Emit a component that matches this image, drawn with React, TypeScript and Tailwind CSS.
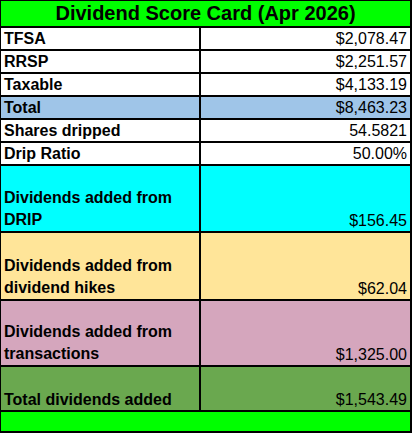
import React from 'react'

type Row = { label: React.ReactNode; value: string; bg: string; h: string; multi?: boolean }

const rows: Row[] = [
  { label: 'TFSA', value: '$2,078.47', bg: 'bg-white', h: 'h-[21px]' },
  { label: 'RRSP', value: '$2,251.57', bg: 'bg-white', h: 'h-[21px]' },
  { label: 'Taxable', value: '$4,133.19', bg: 'bg-white', h: 'h-[21px]' },
  { label: 'Total', value: '$8,463.23', bg: 'bg-[#9fc5e8]', h: 'h-[21px]' },
  { label: 'Shares dripped', value: '54.5821', bg: 'bg-white', h: 'h-[21px]' },
  { label: 'Drip Ratio', value: '50.00%', bg: 'bg-white', h: 'h-[21px]' },
  { label: <>Dividends added from<br />DRIP</>, value: '$156.45', bg: 'bg-[#00ffff]', h: 'h-[65px]', multi: true },
  { label: <>Dividends added from<br />dividend hikes</>, value: '$62.04', bg: 'bg-[#ffe599]', h: 'h-[66px]', multi: true },
  { label: <>Dividends added from<br />transactions</>, value: '$1,325.00', bg: 'bg-[#d5a6bd]', h: 'h-[64px]', multi: true },
  { label: 'Total dividends added', value: '$1,543.49', bg: 'bg-[#6aa84f]', h: 'h-[43px]' },
]

const App = () => {
  return (
    <div className="w-[412px] h-[433px] bg-white" style={{ fontFamily: '"Liberation Sans", Arial, sans-serif' }}>
      <div className="grid grid-cols-[198px_209px] gap-[2px] bg-black pt-[1px] pl-[1px] pr-[2px] pb-[2px] text-black">
        {/* title */}
        <div className="col-span-2 h-[25px] bg-[#00ff00] flex items-center justify-center text-[20px] leading-[25px] font-bold">
          Dividend Score Card (Apr 2026)
        </div>

        {rows.map((r, i) => (
          <React.Fragment key={i}>
            <div
              className={`${r.bg} ${r.h} flex items-end pl-[3px] text-[16px] font-bold ${r.multi ? 'leading-[22px]' : 'leading-[21px]'}`}
            >
              <div>{r.label}</div>
            </div>
            <div className={`${r.bg} ${r.h} flex items-end justify-end pr-[3px] text-[16px] leading-[21px]`}>
              {r.value}
            </div>
          </React.Fragment>
        ))}

        {/* bottom bar */}
        <div className="col-span-2 h-[19px] bg-[#00ff00]" />
      </div>
    </div>
  )
}

export default App
